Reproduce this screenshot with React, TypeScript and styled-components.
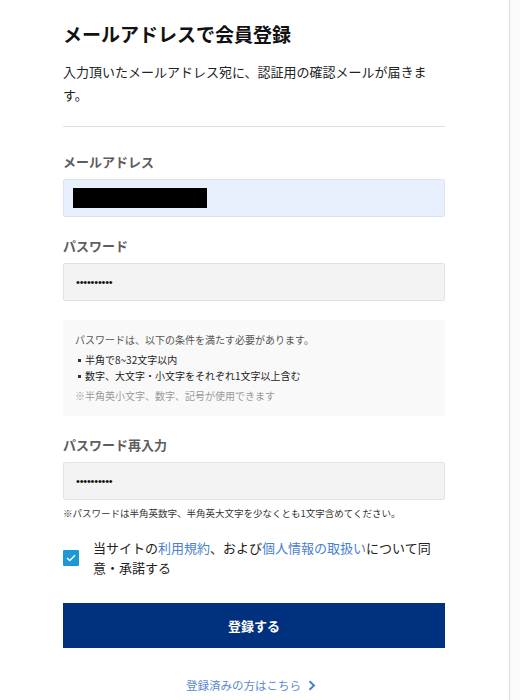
import styled, { createGlobalStyle } from "styled-components"

const GlobalStyle = createGlobalStyle`
  html, body {
    margin: 0;
    padding: 0;
    background: #fff;
  }
  body {
    font-family: "Noto Sans CJK JP", "Noto Sans", sans-serif;
    color: #222;
  }
`

const rules = [
    "半角で8~32文字以内",
    "数字、大文字・小文字をそれぞれ1文字以上含む",
]

export default function App() {
    return (
        <>
            <GlobalStyle />
            <Page>
                <Main>
                    <Form>
                        <Title>メールアドレスで会員登録</Title>
                        <Lead>入力頂いたメールアドレス宛に、認証用の確認メールが届きます。</Lead>
                        <Divider />

                        <Label $top={25}>メールアドレス</Label>
                        <Field $autofill>
                            <Redacted />
                        </Field>

                        <Label $top={19}>パスワード</Label>
                        <Field>
                            <Dots>••••••••••</Dots>
                        </Field>

                        <InfoBox>
                            <InfoText>パスワードは、以下の条件を満たす必要があります。</InfoText>
                            <RuleList>
                                {rules.map((rule) => (
                                    <RuleItem key={rule}>{rule}</RuleItem>
                                ))}
                            </RuleList>
                            <InfoNote>※半角英小文字、数字、記号が使用できます</InfoNote>
                        </InfoBox>

                        <Label $top={19}>パスワード再入力</Label>
                        <Field>
                            <Dots>••••••••••</Dots>
                        </Field>
                        <Hint>※パスワードは半角英数字、半角英大文字を少なくとも1文字含めてください。</Hint>

                        <AgreeRow>
                            <CheckBox>
                                <svg width="10" height="8" viewBox="0 0 10 8">
                                    <polyline points="1,4 3.8,6.6 9,1.2" fill="none" stroke="#fff" strokeWidth="1.4" />
                                </svg>
                            </CheckBox>
                            <AgreeText>
                                当サイトの<TextLink>利用規約</TextLink>、および<TextLink>個人情報の取扱い</TextLink>について同意・承諾する
                            </AgreeText>
                        </AgreeRow>

                        <SubmitButton type="button">登録する</SubmitButton>

                        <LoginLink>
                            登録済みの方はこちら
                            <svg width="8" height="11" viewBox="0 0 8 11">
                                <polyline points="1.5,1.2 6,5.5 1.5,9.8" fill="none" stroke="#4a7dcc" strokeWidth="2" />
                            </svg>
                        </LoginLink>
                    </Form>
                </Main>
                <Gutter />
            </Page>
        </>
    )
}

const Page = styled.div`
display: flex;
min-height: 700px;
`

const Main = styled.main`
flex: 1;
`

const Gutter = styled.aside`
width: 10px;
border-left: 1px solid #dcdcdc;
background: #fafafa;
`

const Form = styled.div`
width: 382px;
margin-left: 63px;
padding-top: 20px;
display: flex;
flex-direction: column;
`

const Title = styled.h1`
margin: 0;
font-size: 19px;
line-height: 28px;
font-weight: 700;
color: #111;
`

const Lead = styled.p`
margin: 12px 0 0;
max-width: 370px;
font-size: 13px;
line-height: 23px;
color: #222;
`

const Divider = styled.hr`
margin: 20px 0 0;
border: 0;
border-top: 1px solid #dedede;
`

const Label = styled.div<{ $top: number }>`
margin-top: ${(p) => p.$top}px;
margin-bottom: 7px;
font-size: 13px;
line-height: 20px;
font-weight: 700;
color: #5e5e5e;
`

const Field = styled.div<{ $autofill?: boolean }>`
box-sizing: border-box;
height: 38px;
display: flex;
align-items: center;
padding: 0 12px;
background: ${(p) => (p.$autofill ? "#e8f0fe" : "#f3f3f3")};
border: 1px solid ${(p) => (p.$autofill ? "#dde3ee" : "#e2e2e2")};
border-radius: 2px;
`

const Redacted = styled.span`
display: block;
width: 134px;
height: 20px;
margin-left: -3px;
background: #000;
`

const Dots = styled.span`
font-family: "Liberation Sans", sans-serif;
font-size: 11px;
color: #111;
letter-spacing: -0.2px;
`

const InfoBox = styled.div`
margin-top: 19px;
padding: 12px 12px;
background: #f9f9f9;
font-size: 10px;
line-height: 16px;
`

const InfoText = styled.p`
margin: 0;
color: #555;
`

const RuleList = styled.ul`
margin: 4px 0 0;
padding: 0 0 0 10px;
list-style: none;
`

const RuleItem = styled.li`
position: relative;
color: #222;
&::before {
    content: "";
    position: absolute;
    left: -7px;
    top: 7px;
    width: 3px;
    height: 3px;
    background: #333;
}
`

const InfoNote = styled.p`
margin: 4px 0 0;
color: #999;
`

const Hint = styled.p`
margin: 5px 0 0;
font-size: 9.5px;
line-height: 16px;
color: #333;
`

const AgreeRow = styled.label`
margin-top: 17px;
display: flex;
align-items: center;
gap: 14px;
`

const CheckBox = styled.span`
flex: none;
width: 16px;
height: 16px;
display: flex;
align-items: center;
justify-content: center;
background: #1b98d5;
border-radius: 1px;
`

const AgreeText = styled.span`
max-width: 345px;
font-size: 13px;
line-height: 20px;
color: #222;
`

const TextLink = styled.a`
color: #4a80d0;
text-decoration: none;
`

const SubmitButton = styled.button`
margin-top: 25px;
height: 45px;
border: 0;
border-radius: 0;
background: #00317f;
color: #fff;
font-family: inherit;
font-size: 13px;
font-weight: 700;
cursor: pointer;
`

const LoginLink = styled.a`
margin-top: 27px;
align-self: center;
display: flex;
align-items: center;
gap: 7px;
margin-left: -6px;
font-size: 11.5px;
line-height: 20px;
color: #5c8ad0;
`
